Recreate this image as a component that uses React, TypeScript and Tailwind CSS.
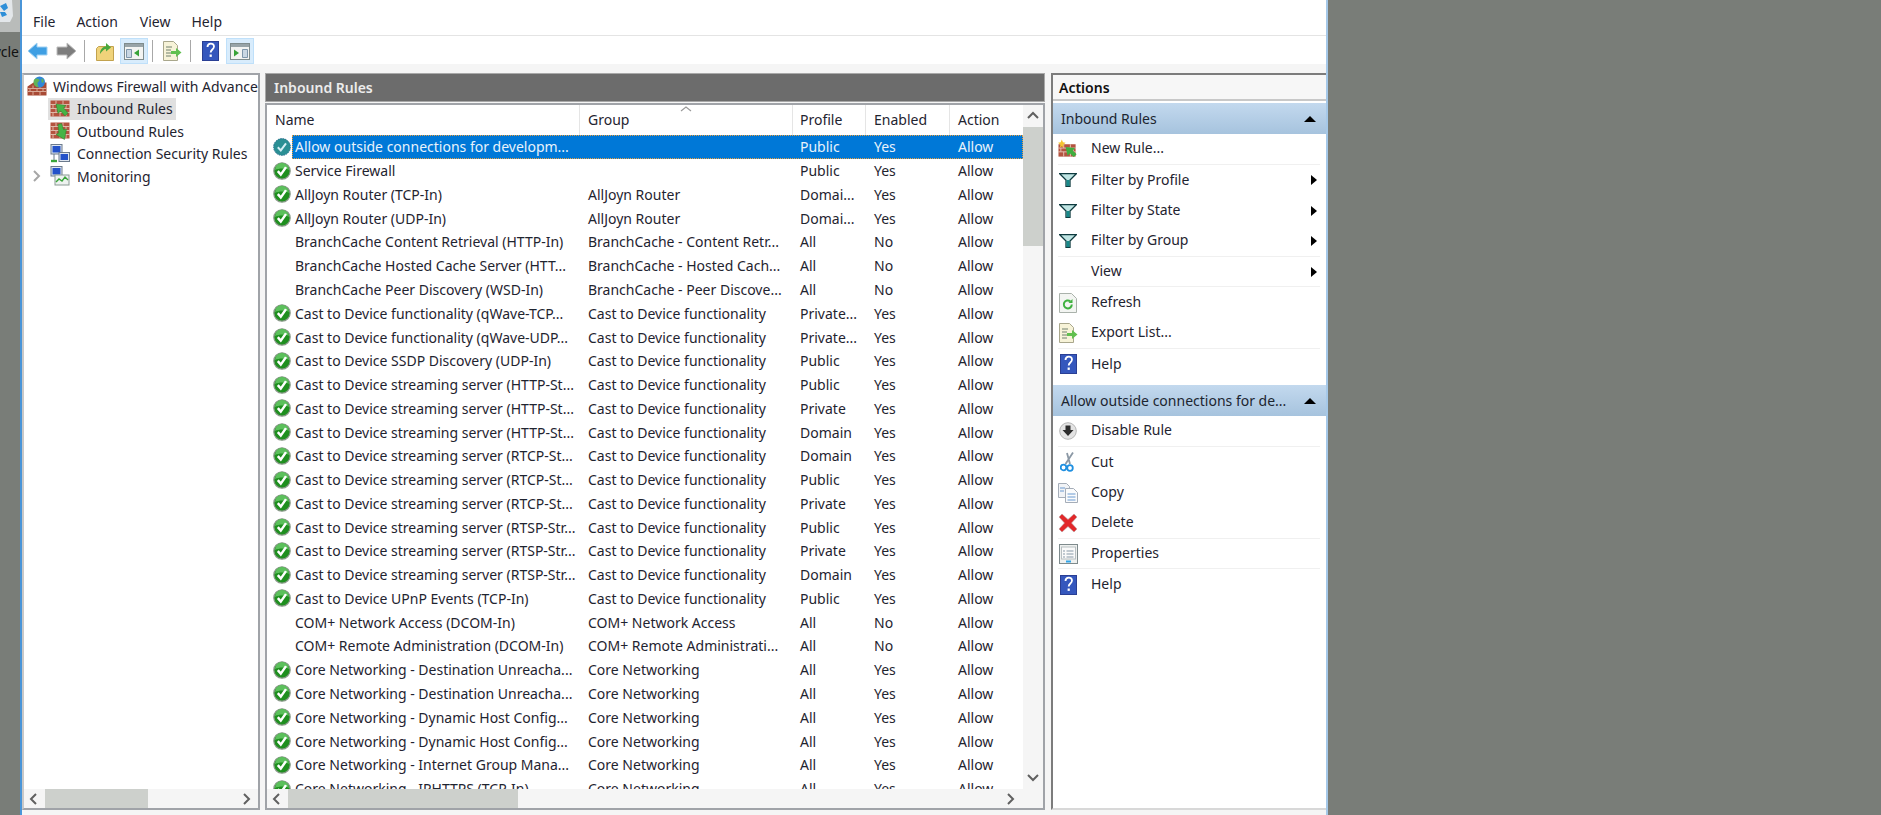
import type { ReactNode } from "react";

type Rule = { name: string; group?: string; profile: string; enabled?: string; icon?: boolean };

const cast = "Cast to Device functionality";
const core = "Core Networking";

const rules: Rule[] = [
  { name: "Service Firewall", profile: "Public" },
  { name: "AllJoyn Router (TCP-In)", group: "AllJoyn Router", profile: "Domai..." },
  { name: "AllJoyn Router (UDP-In)", group: "AllJoyn Router", profile: "Domai..." },
  { name: "BranchCache Content Retrieval (HTTP-In)", group: "BranchCache - Content Retr...", profile: "All", enabled: "No", icon: false },
  { name: "BranchCache Hosted Cache Server (HTT...", group: "BranchCache - Hosted Cach...", profile: "All", enabled: "No", icon: false },
  { name: "BranchCache Peer Discovery (WSD-In)", group: "BranchCache - Peer Discove...", profile: "All", enabled: "No", icon: false },
  { name: "Cast to Device functionality (qWave-TCP...", group: cast, profile: "Private..." },
  { name: "Cast to Device functionality (qWave-UDP...", group: cast, profile: "Private..." },
  { name: "Cast to Device SSDP Discovery (UDP-In)", group: cast, profile: "Public" },
  { name: "Cast to Device streaming server (HTTP-St...", group: cast, profile: "Public" },
  { name: "Cast to Device streaming server (HTTP-St...", group: cast, profile: "Private" },
  { name: "Cast to Device streaming server (HTTP-St...", group: cast, profile: "Domain" },
  { name: "Cast to Device streaming server (RTCP-St...", group: cast, profile: "Domain" },
  { name: "Cast to Device streaming server (RTCP-St...", group: cast, profile: "Public" },
  { name: "Cast to Device streaming server (RTCP-St...", group: cast, profile: "Private" },
  { name: "Cast to Device streaming server (RTSP-Str...", group: cast, profile: "Public" },
  { name: "Cast to Device streaming server (RTSP-Str...", group: cast, profile: "Private" },
  { name: "Cast to Device streaming server (RTSP-Str...", group: cast, profile: "Domain" },
  { name: "Cast to Device UPnP Events (TCP-In)", group: cast, profile: "Public" },
  { name: "COM+ Network Access (DCOM-In)", group: "COM+ Network Access", profile: "All", enabled: "No", icon: false },
  { name: "COM+ Remote Administration (DCOM-In)", group: "COM+ Remote Administrati...", profile: "All", enabled: "No", icon: false },
  { name: "Core Networking - Destination Unreacha...", group: core, profile: "All" },
  { name: "Core Networking - Destination Unreacha...", group: core, profile: "All" },
  { name: "Core Networking - Dynamic Host Config...", group: core, profile: "All" },
  { name: "Core Networking - Dynamic Host Config...", group: core, profile: "All" },
  { name: "Core Networking - Internet Group Mana...", group: core, profile: "All" },
  { name: "Core Networking - IPHTTPS (TCP-In)", group: core, profile: "All" },
];

function Check() {
  return (
    <svg width="18" height="18" viewBox="0 0 18 18" className="shrink-0">
      <circle cx="9" cy="9" r="8.200" fill="#1f8f1f" stroke="#8a9a8a" strokeWidth="1.200" />
      <path d="M2 8a7 7 0 0 1 14 0c-3-2-10-2-14 0z" fill="#5cc05c" />
      <path d="M4.800 9.200l3 3.400 5.200-7.500" fill="none" stroke="#fff" strokeWidth="2.500" />
    </svg>
  );
}

function SelectedCheck() {
  return (
    <svg width="18" height="18" viewBox="0 0 18 18" className="shrink-0">
      <circle cx="9" cy="9" r="8.400" fill="#2a8f94" stroke="#2e6f8f" strokeWidth="1" strokeDasharray="1.500 1" />
      <path d="M4.800 9.200l3 3.200 5.200-7" fill="none" stroke="#d5eef5" strokeWidth="2" />
    </svg>
  );
}

function Bricks({ arrow }: { arrow: "in" | "out" }) {
  return (
    <svg width="20" height="18" viewBox="0 0 20 18">
      <rect x="0.500" y="0.500" width="19" height="16" fill="#b4533f" />
      <path d="M0 4.500h20M0 8.500h20M0 12.500h20M6 0.500v4M13 0.500v4M3 4.500v4M10 4.500v4M16 4.500v4M6 8.500v4M13 8.500v4M3 12.500v4M10 12.500v4M16 12.500v4" stroke="#dfb8a8" strokeWidth="1" />
      {arrow === "in" && <path d="M6 4l10 1.500-2.400 2.400 4.400 5-3 3-4.400-5-2.600 2.600z" fill="#46b446" stroke="#2b7f2b" strokeWidth="0.500" />}
      {arrow === "out" && <path d="M8 2.500l3.500-1 2 6 3-.5-2 10.500-8.500-5 2.800-1.500z" fill="#46b446" stroke="#2b7f2b" strokeWidth="0.500" />}
    </svg>
  );
}

function RootIcon() {
  return (
    <svg width="20" height="20" viewBox="0 0 20 20">
      <path d="M0.500 10.500l6-4h13v13H.5z" fill="#a84a35" />
      <path d="M.5 12.500h19M.5 15.500h19M6 9.500v3M13 9.500v3M3 12.500v3M10 12.500v3M16 12.500v3M6 15.500v4M13 15.500v4" stroke="#d9a997" strokeWidth="1" />
      <circle cx="12.500" cy="6" r="5.500" fill="#2f87d9" />
      <path d="M9.500 2.500c2 0 3 1 3 2s-2 1-2 3 1 2 1 3.500c-3 0-5-2-5-5 0-2 1-3.500 3-3.500zM14.500 2.500l2 1 0 3-2 0z" fill="#62b357" />
    </svg>
  );
}

function NetworkIcon({ chart }: { chart?: boolean }) {
  return (
    <svg width="20" height="20" viewBox="0 0 20 20">
      <rect x="1" y="0.500" width="11" height="9.500" fill="#dfe6ef" stroke="#6b7a8c" />
      <rect x="2.500" y="2" width="8" height="6.500" fill="#2452c9" />
      {chart ? (
        <>
          <rect x="5" y="9" width="14" height="10" fill="#eef2f0" stroke="#8a9a94" />
          <path d="M6 16l3-3 3 2 3-4 3 3" fill="none" stroke="#3aa53a" strokeWidth="1.400" />
        </>
      ) : (
        <>
          <rect x="9" y="8.500" width="10.500" height="9" fill="#dfe6ef" stroke="#6b7a8c" />
          <rect x="10.500" y="10" width="7.500" height="6" fill="#2452c9" />
          <path d="M1 17h6" stroke="#3aa53a" strokeWidth="2.400" />
          <path d="M4 10v6" stroke="#6b7a8c" strokeWidth="1" />
        </>
      )}
    </svg>
  );
}

function ArrowButton({ color, edge, flip }: { color: string; edge: string; flip?: boolean }) {
  return (
    <svg width="21" height="18" viewBox="0 0 21 18" className={flip ? "-scale-x-100" : ""}>
      <path d="M1 9l9-8v4h10v8H10v4z" fill={color} stroke={edge} strokeWidth="1" strokeLinejoin="round" />
    </svg>
  );
}

function HelpIcon() {
  return (
    <svg width="17" height="20" viewBox="0 0 17 20">
      <rect x="0.500" y="0.500" width="16" height="19" fill="#3557bd" stroke="#2a3f94" />
      <path d="M5.500 6c0-4.500 6.500-4.500 6.500-.5 0 3-3.300 3-3.300 6" fill="none" stroke="#fff" strokeWidth="1.800" />
      <rect x="7.600" y="13.500" width="2.200" height="2.400" fill="#fff" />
    </svg>
  );
}

function PaneIcon({ side }: { side: "left" | "right" }) {
  return (
    <svg width="20" height="17" viewBox="0 0 20 17">
      <rect x="0.500" y="0.500" width="19" height="16" fill="#f3f4f2" stroke="#7f8c8d" />
      <rect x="1" y="1" width="18" height="3" fill="#98a4a8" />
      {side === "left" ? (
        <>
          <path d="M2.500 6.500h5v8h-5z" fill="#c9d7e3" stroke="#7f97ab" />
          <path d="M15 6.500v7l-5-3.500z" fill="#38a338" />
        </>
      ) : (
        <>
          <path d="M12.500 6.500h5v8h-5z" fill="#c9d7e3" stroke="#7f97ab" />
          <path d="M4 6.500v7l5-3.500z" fill="#38a338" />
        </>
      )}
    </svg>
  );
}

function UpFolder() {
  return (
    <svg width="18" height="20" viewBox="0 0 18 20">
      <path d="M0.500 7.500l2-2h15v14h-17z" fill="#f0d37a" stroke="#c2a24e" />
      <path d="M4 13c0-5 3-7.500 6-7.500V2l5 4.500-5 4V8c-2 0-4 2-6 5z" fill="#49a83d" />
    </svg>
  );
}

function ExportIcon() {
  return (
    <svg width="20" height="20" viewBox="0 0 20 20">
      <path d="M1.500 0.500h10l4 4v15h-14z" fill="#f7f3d8" stroke="#a9a78c" />
      <path d="M4 6h6M4 9h5M4 12h5M4 15h5" stroke="#71806e" strokeWidth="1" />
      <path d="M9 10h5V7l5.500 4.500L14 16v-3H9z" fill="#61c04f" />
    </svg>
  );
}

function Filter() {
  return (
    <svg width="18" height="14" viewBox="0 0 18 14">
      <path d="M0.700 0.700h16.600L11 7v6.300H7V7z" fill="#bfe5e3" stroke="#0e3b3f" strokeWidth="1.300" />
      <path d="M7.500 7h3v6h-3z" fill="#188a8a" />
    </svg>
  );
}

function NewRuleIcon() {
  return (
    <svg width="21" height="20" viewBox="0 0 21 20">
      <rect x="0.500" y="5" width="18" height="13" fill="#b4533f" />
      <path d="M0 9h19M0 13h19M6 5v4M13 5v4M3 9v4M10 9v4M16 9v4M6 13v5M13 13v5" stroke="#e6c3b4" strokeWidth="1" />
      <path d="M8 8l10 1-2.500 2.500 4 4-3 3-4-4-2.500 2.500z" fill="#3fae3f" />
      <path d="M4 0l1.200 3L8 3.500 5.500 5.500 6 8.500 4 7 2 8.500l.5-3L0 3.500 2.800 3z" fill="#f4c430" />
    </svg>
  );
}

function RefreshIcon() {
  return (
    <svg width="18" height="20" viewBox="0 0 18 20">
      <path d="M0.500 0.500h12l5 5v14h-17z" fill="#f3f5f2" stroke="#aab2ab" />
      <path d="M12.800 11.500a4 4 0 1 1-1.500-3.200" fill="none" stroke="#3fb13f" strokeWidth="2" />
      <path d="M13.500 6v4h-4z" fill="#3fb13f" />
    </svg>
  );
}

function DisableIcon() {
  return (
    <svg width="18" height="18" viewBox="0 0 18 18">
      <circle cx="9" cy="9" r="8.300" fill="#e3e3e3" stroke="#b5b5b5" />
      <path d="M6.500 3.500h5V8h3L9 14 3.500 8h3z" fill="#2b2b2b" />
    </svg>
  );
}

function CutIcon() {
  return (
    <svg width="16" height="20" viewBox="0 0 16 20">
      <path d="M13 0.500L5.500 12M7 1l3 11" stroke="#8b98a5" strokeWidth="1.800" fill="none" />
      <circle cx="3.500" cy="15.500" r="2.800" fill="none" stroke="#1f8fe0" strokeWidth="1.800" />
      <circle cx="10" cy="16" r="2.800" fill="none" stroke="#1f8fe0" strokeWidth="1.800" />
    </svg>
  );
}

function CopyIcon() {
  return (
    <svg width="20" height="20" viewBox="0 0 20 20">
      <path d="M0.500 0.500h8l3 3v11h-11z" fill="#f1f3f6" stroke="#a5adb8" />
      <path d="M7.500 5.500h8l4 4v10h-12z" fill="#fafbfc" stroke="#a5adb8" />
      <path d="M2 5h5M2 8h4M9.500 11h8M9.500 14h8M9.500 17h8" stroke="#6b9ad1" strokeWidth="1" />
    </svg>
  );
}

function DeleteIcon() {
  return (
    <svg width="20" height="20" viewBox="0 0 20 20">
      <path d="M1 4l3-3 6 5.500L16 1l3 3-5.500 6 5.500 6-3 3-6-5.500L4 19l-3-3 5.500-6z" fill="#e2282a" stroke="#b8a0a0" strokeWidth="0.600" />
    </svg>
  );
}

function PropertiesIcon() {
  return (
    <svg width="19" height="20" viewBox="0 0 19 20">
      <rect x="0.500" y="0.500" width="18" height="19" fill="#eef0ef" stroke="#7e8a8c" />
      <rect x="2.500" y="3" width="14" height="12" fill="#fafafa" stroke="#b8bfc2" />
      <path d="M4 7h2M4 10h2M4 13h2M7.500 7h7M7.500 10h7M7.500 13h7" stroke="#8799a8" strokeWidth="1" />
      <path d="M7 17.500h5" stroke="#30a5e8" strokeWidth="2" />
    </svg>
  );
}

function Chevron({ dir, light }: { dir: "left" | "right" | "up" | "down"; light?: boolean }) {
  const d = { left: "M7 1L2 6l5 5", right: "M3 1l5 5-5 5", up: "M1 8l5-5 5 5", down: "M1 3l5 5 5-5" }[dir];
  return (
    <svg width="12" height="12" viewBox="0 0 12 12" className="shrink-0">
      <path d={d} fill="none" stroke={light ? "#a6a6a6" : "#606060"} strokeWidth="2" />
    </svg>
  );
}

function TreeRow({ icon, label, selected, twisty }: { icon: ReactNode; label: string; selected?: boolean; twisty?: boolean }) {
  return (
    <div className="flex h-[22.500px] items-center">
      <div className="flex w-[24px] justify-center pl-[2px]">{twisty && <Chevron dir="right" light />}</div>
      <div className={`flex h-[22.500px] items-center pl-[2px] pr-[3px] ${selected ? "bg-[#e0e0e0]" : ""}`}>
        <div className="flex w-[27px] shrink-0">{icon}</div>
        <span>{label}</span>
      </div>
    </div>
  );
}

function ActionRow({ icon, label, sep, more }: { icon?: ReactNode; label: string; sep?: boolean; more?: boolean }) {
  return (
    <div className={`ml-[5px] mr-[6px] flex h-[30.700px] items-center ${sep ? "border-b border-[#f0f0f0]" : ""}`}>
      <div className="mr-[13px] flex w-[20px] shrink-0 items-center justify-center">{icon}</div>
      <span className="mb-[2px] flex-1">{label}</span>
      {more && <div className="mr-[3px] h-0 w-0 border-y-[5px] border-l-[6px] border-y-transparent border-l-black" />}
    </div>
  );
}

function ActionHead({ label }: { label: string }) {
  return (
    <div className="flex h-[31px] shrink-0 items-center justify-between bg-linear-to-b from-[#c3d9ee] to-[#a6c3de] pl-[8px] pr-[10px] text-[#1c2530]">
      <span>{label}</span>
      <div className="h-0 w-0 border-x-[6px] border-b-[6px] border-x-transparent border-b-black" />
    </div>
  );
}

function ToolSep({ className }: { className: string }) {
  return <div className={`h-[22px] w-px bg-[#a8a8a8] ${className}`} />;
}

function ToolButton({ children, on, className }: { children: ReactNode; on?: boolean; className: string }) {
  return (
    <div className={`flex h-[26px] w-[28px] items-center justify-center border ${on ? "border-[#bfe0fa] bg-[#d8ecfc]" : "border-transparent"} ${className}`}>
      {children}
    </div>
  );
}

function Columns({ a, b, c, d, e }: { a: ReactNode; b?: string; c: string; d: string; e: string }) {
  return (
    <>
      <div className="w-[312px] shrink-0 overflow-hidden whitespace-nowrap">{a}</div>
      <div className="w-[213px] shrink-0 overflow-hidden whitespace-nowrap pl-[9px]">{b}</div>
      <div className="w-[73px] shrink-0 whitespace-nowrap pl-[8px]">{c}</div>
      <div className="w-[84px] shrink-0 whitespace-nowrap pl-[9px]">{d}</div>
      <div className="w-[74px] shrink-0 whitespace-nowrap pl-[9px]">{e}</div>
    </>
  );
}

export default function App() {
  return (
    <div className="flex h-[815px] w-[1881px] overflow-hidden bg-[#797d78] font-['Noto_Sans','Open_Sans',sans-serif] text-[14px] text-[#1f2430]">
      {/* desktop edge with the recycle bin cut off by the window */}
      <div className="relative w-[20px] shrink-0 overflow-hidden">
        <div className="absolute left-0 top-0 h-[32px] w-[20px] bg-[#b9bcba]">
          <svg width="20" height="32" viewBox="0 0 20 32">
            <path d="M0 0h12l1 16-3 6H0z" fill="#e3e7ea" />
            <path d="M0 6l6-3 2 5-4 3zM0 12l5 0 2 3-5 2z" fill="#2e8fd8" />
          </svg>
        </div>
        <span className="absolute right-[1px] top-[41px] text-[14px] text-[#111]">ycle</span>
      </div>

      <div className="flex w-[1308px] shrink-0 flex-col border-l-2 border-r-2 border-[#4a95d8] border-r-[#a5c8e8] bg-[#f5f5f5]">
        <div className="flex h-[35px] shrink-0 items-center gap-[21px] bg-white pl-[11px] pt-[7px]">
          <span>File</span>
          <span>Action</span>
          <span className="ml-[1px]">View</span>
          <span>Help</span>
        </div>
        <div className="flex h-[29px] shrink-0 items-center border-t border-[#e4e4e4] bg-white pt-[2px]">
          <div className="flex w-[30px] justify-center"><ArrowButton color="#3f9fe3" edge="#9fd0f2" /></div>
          <div className="flex w-[28px] justify-center"><ArrowButton color="#7d7d7d" edge="#bdbdbd" flip /></div>
          <ToolSep className="ml-[4px]" />
          <ToolButton className="ml-[6px]"><UpFolder /></ToolButton>
          <ToolButton className="ml-[1px]" on><PaneIcon side="left" /></ToolButton>
          <ToolSep className="ml-[4px]" />
          <ToolButton className="ml-[5px]"><ExportIcon /></ToolButton>
          <ToolSep className="ml-[4px]" />
          <ToolButton className="ml-[5px]"><HelpIcon /></ToolButton>
          <ToolButton className="ml-[2px]" on><PaneIcon side="right" /></ToolButton>
        </div>

        <div className="flex min-h-0 flex-1 gap-[5px] pb-[5px] pt-[9px]">
          {/* tree */}
          <div className="flex w-[238px] shrink-0 flex-col border-2 border-[#a0a3a8] border-l-[#c8c8c8] bg-white">
            <div className="min-h-0 flex-1 overflow-hidden">
              <div className="flex h-[22.500px] items-center whitespace-nowrap pl-[3px]">
                <div className="flex w-[26px] shrink-0"><RootIcon /></div>
                <span>Windows Firewall with Advance</span>
              </div>
              <TreeRow icon={<Bricks arrow="in" />} label="Inbound Rules" selected />
              <TreeRow icon={<Bricks arrow="out" />} label="Outbound Rules" />
              <TreeRow icon={<NetworkIcon />} label="Connection Security Rules" />
              <TreeRow icon={<NetworkIcon chart />} label="Monitoring" twisty />
            </div>
            <div className="flex h-[19px] shrink-0 items-center bg-[#f5f5f5]">
              <div className="flex w-[21px] justify-center"><Chevron dir="left" /></div>
              <div className="h-full w-[103px] bg-[#cdd0cc]" />
              <div className="flex-1" />
              <div className="flex w-[22px] justify-center"><Chevron dir="right" /></div>
            </div>
          </div>

          {/* rule list */}
          <div className="flex w-[780px] shrink-0 flex-col">
            <div className="flex h-[29px] shrink-0 items-center border border-[#a8a8a8] bg-[#6c6c6c] pl-[8px] font-semibold text-[#ececec]">
              Inbound Rules
            </div>
            <div className="mt-[1px] flex min-h-0 flex-1 flex-col border-2 border-[#a0a3a8] bg-white">
              <div className="flex min-h-0 flex-1">
                <div className="min-w-0 flex-1 overflow-hidden">
                  <div className="relative flex h-[30px] items-center pb-[1px]">
                    <Columns a={<span className="pl-[8px]">Name</span>} b="Group" c="Profile" d="Enabled" e="Action" />
                    <div className="absolute left-[312px] top-0 h-[30px] w-px bg-[#e5e5e5]" />
                    <div className="absolute left-[525px] top-0 h-[30px] w-px bg-[#e5e5e5]" />
                    <div className="absolute left-[598px] top-0 h-[30px] w-px bg-[#e5e5e5]" />
                    <div className="absolute left-[682px] top-0 h-[30px] w-px bg-[#e5e5e5]" />
                    <svg width="12" height="6" viewBox="0 0 12 6" className="absolute left-[413px] top-[1px]">
                      <path d="M1 5l5-4 5 4" fill="none" stroke="#9a9a9a" strokeWidth="1.200" />
                    </svg>
                  </div>
                  <div className="flex h-[23.770px] items-center">
                    <div className="flex w-[25px] shrink-0 justify-end pr-[1px]"><SelectedCheck /></div>
                    <div className="flex h-full min-w-0 flex-1 items-center border border-dotted border-[#e8a040] bg-[#0078d7] text-[#e9f3fb]">
                      <div className="w-[286px] shrink-0 whitespace-nowrap pl-[2px]">Allow outside connections for developm...</div>
                      <div className="w-[213px] shrink-0" />
                      <div className="w-[73px] shrink-0 pl-[8px]">Public</div>
                      <div className="w-[84px] shrink-0 pl-[9px]">Yes</div>
                      <div className="w-[73px] shrink-0 pl-[9px]">Allow</div>
                    </div>
                  </div>
                  {rules.map((rule, i) => (
                    <div key={i} className="flex h-[23.770px] items-center">
                      <Columns
                        a={
                          <div className="flex items-center">
                            <div className="flex w-[25px] shrink-0 justify-end pr-[1px]">{rule.icon !== false && <Check />}</div>
                            <span className="pl-[3px]">{rule.name}</span>
                          </div>
                        }
                        b={rule.group}
                        c={rule.profile}
                        d={rule.enabled ?? "Yes"}
                        e="Allow"
                      />
                    </div>
                  ))}
                </div>
                <div className="flex w-[20px] shrink-0 flex-col items-center bg-[#f5f5f5]">
                  <div className="flex h-[22px] items-center"><Chevron dir="up" /></div>
                  <div className="h-[119px] w-full bg-[#cdd0cc]" />
                  <div className="flex-1" />
                  <div className="flex h-[22px] items-center"><Chevron dir="down" /></div>
                </div>
              </div>
              <div className="flex h-[19px] shrink-0 items-center bg-[#f5f5f5]">
                <div className="flex w-[21px] justify-center"><Chevron dir="left" /></div>
                <div className="h-full w-[230px] bg-[#cdd0cc]" />
                <div className="flex-1" />
                <div className="mr-[21px] flex w-[22px] justify-center"><Chevron dir="right" /></div>
              </div>
            </div>
          </div>

          {/* actions pane */}
          <div className="ml-[1px] flex min-w-0 flex-1 flex-col border-b-2 border-l-2 border-t-2 border-[#7c7c7c] border-b-[#d8d8d8] bg-white">
            <div className="flex h-[26px] shrink-0 items-center border-b-2 border-[#c8c8c8] bg-[#f7f7f7] pl-[6px] font-semibold text-[#111]">
              Actions
            </div>
            <div className="h-[2px] shrink-0" />
            <ActionHead label="Inbound Rules" />
            <ActionRow icon={<NewRuleIcon />} label="New Rule..." sep />
            <ActionRow icon={<Filter />} label="Filter by Profile" more />
            <ActionRow icon={<Filter />} label="Filter by State" more />
            <ActionRow icon={<Filter />} label="Filter by Group" more sep />
            <ActionRow label="View" more sep />
            <ActionRow icon={<RefreshIcon />} label="Refresh" />
            <ActionRow icon={<ExportIcon />} label="Export List..." sep />
            <ActionRow icon={<HelpIcon />} label="Help" />
            <div className="h-[5.500px] shrink-0" />
            <ActionHead label="Allow outside connections for de..." />
            <ActionRow icon={<DisableIcon />} label="Disable Rule" sep />
            <ActionRow icon={<CutIcon />} label="Cut" />
            <ActionRow icon={<CopyIcon />} label="Copy" />
            <ActionRow icon={<DeleteIcon />} label="Delete" sep />
            <ActionRow icon={<PropertiesIcon />} label="Properties" sep />
            <ActionRow icon={<HelpIcon />} label="Help" />
          </div>
        </div>
      </div>
      <div className="flex-1" />
    </div>
  );
}
